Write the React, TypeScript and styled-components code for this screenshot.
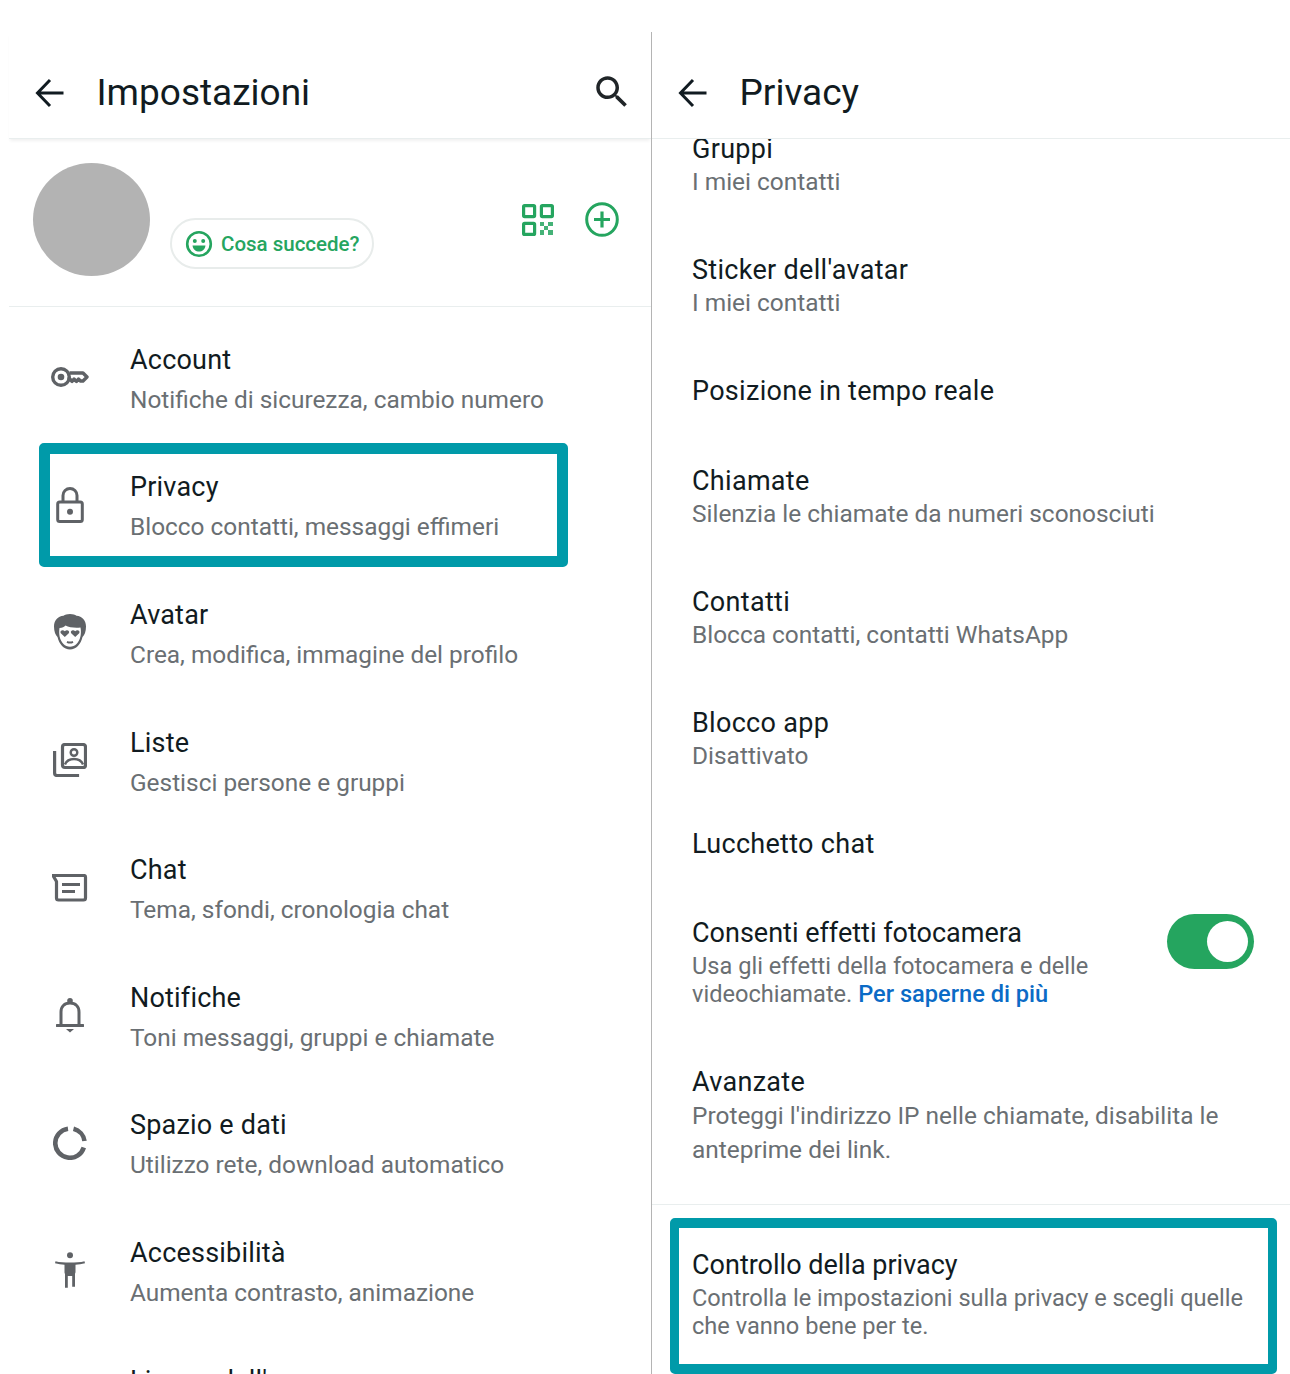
import React from "react";
import styled, { createGlobalStyle } from "styled-components";

const Global = createGlobalStyle`
  html, body { margin: 0; padding: 0; background: #fff; }
  body { font-family: Roboto, "Liberation Sans", sans-serif; }
`;

const INK = "#111b21";
const MUTED = "#6a6f73";
const ICON = "#5f6266";
const GREEN = "#25a55f";
const TEAL = "#009aa9";

const Page = styled.div`
  display: flex;
  width: 1290px;
  height: 1374px;
  overflow: hidden;
  background: #fff;
`;

const LeftPane = styled.section`
  width: 642px;
  margin-top: 32px;
  padding-left: 9px;
  border-right: 1px solid #b4b4b4;
  display: flex;
  flex-direction: column;
  overflow: hidden;
`;

const RightPane = styled.section`
  flex: 1;
  margin-top: 32px;
  display: flex;
  flex-direction: column;
  overflow: hidden;
`;

const Header = styled.header<{ $shadow?: boolean }>`
  height: 107px;
  box-sizing: border-box;
  flex: none;
  display: flex;
  align-items: center;
  gap: 28.5px;
  padding: 15px 24px 0 23px;
  position: relative;
  z-index: 1;
  background: #fff;
  border-bottom: 1px solid #e9eeee;
  box-shadow: ${(p) => (p.$shadow ? "0 3px 3px -1px rgba(0,0,0,.06)" : "none")};
`;

const HeaderTitle = styled.h1`
  margin: 0;
  flex: 1;
  font-size: 37px;
  font-weight: 400;
  line-height: 44px;
  color: ${INK};
`;

const Svg = styled.svg<{ $w: number; $h: number }>`
  width: ${(p) => p.$w}px;
  height: ${(p) => p.$h}px;
  display: block;
  flex: none;
`;

const SearchSlot = styled.div`
  margin: -2px -6px 0 0;
`;

const Profile = styled.div`
  height: 168px;
  flex: none;
  box-sizing: border-box;
  display: flex;
  padding: 24px 32px 0 24px;
  border-bottom: 1px solid #e9eeee;
`;

const Avatar = styled.div`
  width: 117px;
  height: 113px;
  border-radius: 50%;
  background: #b3b3b3;
  flex: none;
`;

const StatusPill = styled.div`
  box-sizing: border-box;
  width: 204px;
  height: 51px;
  margin: 55px 0 0 20px;
  border: 2px solid #e8eceb;
  border-radius: 26px;
  display: flex;
  align-items: center;
  gap: 8px;
  padding-left: 13px;
  color: ${GREEN};
  font-size: 20.5px;
  font-weight: 500;
  white-space: nowrap;
`;

const ProfileActions = styled.div`
  margin-left: auto;
  display: flex;
  align-items: center;
  gap: 31px;
  height: 35px;
  margin-top: 39px;
`;

const SettingsList = styled.div`
  padding-top: 10px;
`;

const SettingRow = styled.div`
  position: relative;
  height: 127.6px;
  display: flex;
  align-items: center;
`;

const IconSlot = styled.div`
  width: 121px;
  flex: none;
  display: flex;
  justify-content: center;
  margin-bottom: 7px;
`;

const RowText = styled.div`
  display: flex;
  flex-direction: column;
  min-width: 0;
`;

const RowTitle = styled.div`
  font-size: 27px;
  line-height: 36px;
  color: ${INK};
  letter-spacing: 0.2px;
  white-space: nowrap;
`;

const RowSub = styled.div`
  font-size: 24.4px;
  line-height: 40px;
  margin-top: 2px;
  color: ${MUTED};
  white-space: nowrap;
`;

const Highlight = styled.div<{ $l: number; $t: number; $w: number; $h: number; $bw: string }>`
  position: absolute;
  left: ${(p) => p.$l}px;
  top: ${(p) => p.$t}px;
  width: ${(p) => p.$w}px;
  height: ${(p) => p.$h}px;
  box-sizing: border-box;
  border-style: solid;
  border-color: ${TEAL};
  border-width: ${(p) => p.$bw};
  border-radius: 5px;
  pointer-events: none;
`;

const Scroller = styled.div`
  flex: 1;
  overflow: hidden;
`;

const PrivacyList = styled.div`
  margin-top: -35px;
`;

const PrivacyRow = styled.div<{ $bottom: number }>`
  padding: 29px 36px ${(p) => p.$bottom}px 40px;
  display: flex;
  align-items: flex-start;
  justify-content: space-between;
`;

const PTitle = styled.div<{ $narrow?: boolean }>`
  font-size: 27px;
  line-height: 33px;
  color: ${INK};
  letter-spacing: ${(p) => (p.$narrow ? 0 : 0.3)}px;
  white-space: nowrap;
`;

const PSub = styled.div<{ $lh?: number; $first?: boolean; $narrow?: boolean }>`
  font-size: ${(p) => (p.$narrow ? 23.6 : 24.45)}px;
  line-height: ${(p) => p.$lh ?? 28}px;
  margin-top: ${(p) => (p.$first ? 2 : 0)}px;
  color: ${MUTED};
  white-space: nowrap;
`;

const LearnMore = styled.span`
  color: #0b6bc6;
  font-weight: 500;
`;

const Toggle = styled.div`
  width: 87px;
  height: 55px;
  border-radius: 28px;
  background: ${GREEN};
  flex: none;
  margin-top: -3px;
  display: flex;
  align-items: center;
  justify-content: flex-end;
  padding-right: 6px;
  box-sizing: border-box;
`;

const Knob = styled.div`
  width: 41px;
  height: 41px;
  border-radius: 50%;
  background: #fff;
`;

const AuditSection = styled.div`
  position: relative;
  border-top: 1px solid #e9eeee;
  padding: 44px 20px 0 40px;
  height: 175px;
  box-sizing: border-box;
`;

const BackIcon = () => (
  <Svg $w={36} $h={36} viewBox="0 0 36 36" fill="none" stroke={INK} strokeWidth="3">
    <path d="M31.500 18H5.500M18 5L5.500 18 18 31" />
  </Svg>
);

const SearchIcon = () => (
  <Svg $w={42} $h={42} viewBox="0 0 24 24" fill="#202528">
    <path d="M15.500 14h-.79l-.28-.27C15.410 12.590 16 11.110 16 9.500 16 5.910 13.090 3 9.500 3S3 5.910 3 9.500 5.910 16 9.500 16c1.610 0 3.090-.59 4.230-1.570l.27.28v.79l5 4.990L20.490 19l-4.990-5zm-6 0C7.010 14 5 11.990 5 9.500S7.010 5 9.500 5 14 7.010 14 9.500 11.990 14 9.500 14z" />
  </Svg>
);

const SmileIcon = () => (
  <Svg $w={28} $h={28} viewBox="0 0 28 28" fill="none">
    <circle cx="14" cy="14" r="11.800" stroke={GREEN} strokeWidth="2.600" />
    <circle cx="9.800" cy="11" r="2" fill={GREEN} />
    <circle cx="18.200" cy="11" r="2" fill={GREEN} />
    <path d="M7.500 15.500h13c-.6 4-3.200 6-6.500 6s-5.900-2-6.500-6z" fill={GREEN} />
  </Svg>
);

const QrIcon = () => (
  <Svg $w={32} $h={32} viewBox="0 0 32 32" fill="none" stroke={GREEN} strokeWidth="3.200">
    <rect x="1.600" y="1.600" width="11" height="11" rx="1" />
    <rect x="19.400" y="1.600" width="11" height="11" rx="1" />
    <rect x="1.600" y="19.400" width="11" height="11" rx="1" />
    <path d="M18 18h4v4h-4zM26 18h5v4h-5zM22 22h4v4h-4zM18 26h4v5h-4zM26 26h5v5h-5z" fill={GREEN} stroke="none" opacity=".85" />
  </Svg>
);

const PlusCircleIcon = () => (
  <Svg $w={34} $h={35} viewBox="0 0 34 35" fill="none" stroke={GREEN} strokeWidth="3">
    <ellipse cx="17" cy="17.500" rx="15.300" ry="15.800" />
    <path d="M17 9.500v16M9 17.500h16" strokeWidth="3.200" />
  </Svg>
);

const KeyIcon = () => (
  <Svg $w={38} $h={22} viewBox="0 0 38 22" fill="none" stroke={ICON} strokeWidth="3.400">
    <circle cx="10" cy="11" r="8.300" />
    <circle cx="10" cy="11" r="3.300" fill={ICON} stroke="none" />
    <path d="M18.500 7h13.500l4 4-4 4h-2.500l-2-2-2 2.500-2.500-2.500-2 2.500-2-2.500h-2.500" strokeLinejoin="round" />
  </Svg>
);

const LockIcon = () => (
  <Svg $w={28} $h={36} viewBox="0 0 28 36" fill="none" stroke={ICON} strokeWidth="3">
    <rect x="1.700" y="15" width="24.600" height="19.500" rx="2" />
    <path d="M7 15V8.500a7 7 0 0 1 14 0V15" />
    <circle cx="14" cy="24.800" r="3" fill={ICON} stroke="none" />
  </Svg>
);

const AvatarIcon = () => (
  <Svg $w={32} $h={36} viewBox="0 0 32 36">
    <path d="M16 0C13 0 11 .8 9.500 1.800 4 2 0 6.500 0 12.500c0 5 1.500 8.500 3.500 10.500C5 30 10 35.500 16 35.500S27 30 28.500 23c2-2 3.500-5.500 3.500-10.500C32 6.500 28 2 22.500 1.800 21 .8 19 0 16 0z" fill={ICON} />
    <path d="M5.500 14c3 0 4.500-1 6-2.500 3.500 2 9.500 2.500 15 2 .7 3 .5 7-.2 9.500C25 28.500 21 32.800 16 32.800S7 28.500 5.700 23c-.6-3-.7-6-.2-9z" fill="#fff" />
    <path d="M10.800 23l-4-3.800c-1.500-2.200 1.800-4.200 4-2 2.200-2.200 5.500-.2 4 2zM21.200 23l-4-3.800c-1.500-2.200 1.800-4.200 4-2 2.200-2.200 5.500-.2 4 2z" fill={ICON} />
    <path d="M13 27.800c2 1 4 1 6 0" stroke={ICON} strokeWidth="2" fill="none" />
  </Svg>
);

const ListsIcon = () => (
  <Svg $w={34} $h={34} viewBox="0 0 34 34" fill="none" stroke={ICON} strokeWidth="3.200">
    <rect x="9.500" y="1.500" width="23" height="23" rx="2.500" />
    <path d="M1.600 8v22a2.500 2.500 0 0 0 2.500 2.500h22" />
    <circle cx="21" cy="9.500" r="3.300" strokeWidth="2.400" />
    <path d="M12 21.500c1.500-4 5.500-5.500 9-5.500s7.500 1.500 9 5.500" strokeWidth="2.400" />
  </Svg>
);

const ChatIcon = () => (
  <Svg $w={36} $h={28} viewBox="1 0 36 28" fill="none" stroke={ICON} strokeWidth="3.200">
    <path d="M2 1.500h31a1.500 1.500 0 0 1 1.500 1.500v21a2 2 0 0 1-2 2H7.500a2 2 0 0 1-2-2V7.500z" strokeLinejoin="round" />
    <path d="M11 10.500h18M11 17.500h13" />
  </Svg>
);

const BellIcon = () => (
  <Svg $w={28} $h={35} viewBox="0 0 28 35" fill="none" stroke={ICON} strokeWidth="3">
    <path d="M5 27V14c0-5.500 3.500-9 9-9s9 3.500 9 9v13" />
    <path d="M1 27.500h26" strokeLinecap="round" />
    <circle cx="14" cy="2.800" r="2.800" fill={ICON} stroke="none" />
    <path d="M10 31h8l-4 3.500z" fill={ICON} stroke="none" />
  </Svg>
);

const StorageIcon = () => (
  <Svg $w={34} $h={34} viewBox="0 0 34 34" fill="none" stroke={ICON} strokeWidth="4.600">
    <path d="M15 2.700A14.600 14.600 0 1 0 30.800 21.500" />
    <path d="M20.500 2.800A14.600 14.600 0 0 1 31.500 15" />
  </Svg>
);

const AccessIcon = () => (
  <Svg $w={30} $h={36} viewBox="0 0 30 36" fill={ICON}>
    <circle cx="15" cy="3.200" r="3" />
    <path d="M.5 9.200c4 1 9 1.300 14.500 1.300s10.500-.3 14.500-1.300l.5 2c-3.300.9-6.500 1.300-9.500 1.500v7c0 1-.2 1.300-.5 2v13h-2.800V24h-4.400v11.700H10V22c-.3-.7-.5-1-.5-2v-7.300c-3-.2-6.200-.6-9.500-1.500z" />
  </Svg>
);

const settings = [
  { icon: <KeyIcon />, title: "Account", sub: "Notifiche di sicurezza, cambio numero" },
  { icon: <LockIcon />, title: "Privacy", sub: "Blocco contatti, messaggi effimeri", marked: true },
  { icon: <AvatarIcon />, title: "Avatar", sub: "Crea, modifica, immagine del profilo" },
  { icon: <ListsIcon />, title: "Liste", sub: "Gestisci persone e gruppi" },
  { icon: <ChatIcon />, title: "Chat", sub: "Tema, sfondi, cronologia chat" },
  { icon: <BellIcon />, title: "Notifiche", sub: "Toni messaggi, gruppi e chiamate" },
  { icon: <StorageIcon />, title: "Spazio e dati", sub: "Utilizzo rete, download automatico" },
  { icon: <AccessIcon />, title: "Accessibilità", sub: "Aumenta contrasto, animazione" },
  { icon: null, title: "Lingua dell'app", sub: "Italiano" },
];

const privacy: { title: string; sub?: string }[] = [
  { title: "Gruppi", sub: "I miei contatti" },
  { title: "Sticker dell'avatar", sub: "I miei contatti" },
  { title: "Posizione in tempo reale" },
  { title: "Chiamate", sub: "Silenzia le chiamate da numeri sconosciuti" },
  { title: "Contatti", sub: "Blocca contatti, contatti WhatsApp" },
  { title: "Blocco app", sub: "Disattivato" },
  { title: "Lucchetto chat" },
];

export default function App() {
  return (
    <Page>
      <Global />
      <LeftPane>
        <Header $shadow>
          <BackIcon />
          <HeaderTitle>Impostazioni</HeaderTitle>
          <SearchSlot>
            <SearchIcon />
          </SearchSlot>
        </Header>
        <Profile>
          <Avatar />
          <StatusPill>
            <SmileIcon />
            Cosa succede?
          </StatusPill>
          <ProfileActions>
            <QrIcon />
            <PlusCircleIcon />
          </ProfileActions>
        </Profile>
        <SettingsList>
          {settings.map((s) => (
            <SettingRow key={s.title}>
              <IconSlot>{s.icon}</IconSlot>
              <RowText>
                <RowTitle>{s.title}</RowTitle>
                <RowSub>{s.sub}</RowSub>
              </RowText>
              {s.marked && <Highlight $l={30} $t={-2} $w={529} $h={124} $bw="11px" />}
            </SettingRow>
          ))}
        </SettingsList>
      </LeftPane>
      <RightPane>
        <Header>
          <BackIcon />
          <HeaderTitle>Privacy</HeaderTitle>
        </Header>
        <Scroller>
          <PrivacyList>
            {privacy.map((p) => (
              <PrivacyRow key={p.title} $bottom={p.sub ? 29 : 27.5}>
                <div>
                  <PTitle>{p.title}</PTitle>
                  {p.sub && <PSub $first>{p.sub}</PSub>}
                </div>
              </PrivacyRow>
            ))}
            <PrivacyRow $bottom={29}>
              <div>
                <PTitle $narrow>Consenti effetti fotocamera</PTitle>
                <PSub $first $narrow>Usa gli effetti della fotocamera e delle</PSub>
                <PSub $narrow>
                  videochiamate. <LearnMore>Per saperne di più</LearnMore>
                </PSub>
              </div>
              <Toggle>
                <Knob />
              </Toggle>
            </PrivacyRow>
            <PrivacyRow $bottom={37}>
              <div>
                <PTitle>Avanzate</PTitle>
                <PSub $lh={34}>Proteggi l'indirizzo IP nelle chiamate, disabilita le</PSub>
                <PSub $lh={34}>anteprime dei link.</PSub>
              </div>
            </PrivacyRow>
            <AuditSection>
              <PTitle $narrow>Controllo della privacy</PTitle>
              <PSub $first $narrow>Controlla le impostazioni sulla privacy e scegli quelle</PSub>
              <PSub $narrow>che vanno bene per te.</PSub>
              <Highlight $l={18} $t={13} $w={607} $h={156} $bw="10px 9px" />
            </AuditSection>
          </PrivacyList>
        </Scroller>
      </RightPane>
    </Page>
  );
}
